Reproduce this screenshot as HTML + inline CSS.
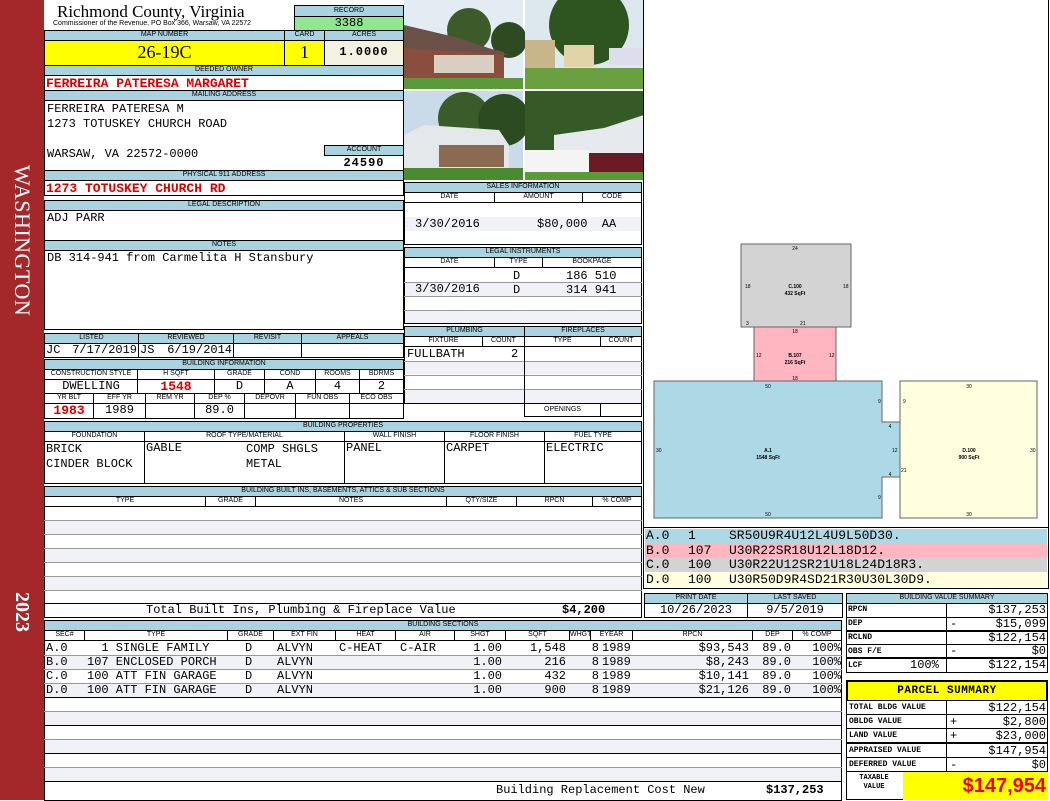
<!DOCTYPE html>
<html><head><meta charset="utf-8"><style>
*{margin:0;padding:0;box-sizing:border-box}
body{width:1050px;height:800px;position:relative;background:#fff;overflow:hidden;font-family:"Liberation Mono",monospace}
.a{position:absolute}
.h{position:absolute;background:#a9d3e1;border:1px solid #000;font:7px/8px "Liberation Sans",sans-serif;text-align:center;color:#000;overflow:hidden;white-space:nowrap}
.w{position:absolute;background:#fff;border:1px solid #000;font:7px/8px "Liberation Sans",sans-serif;text-align:center;overflow:hidden;white-space:nowrap}
.b{position:absolute;border:1px solid #000;background:#fff}
.t{position:absolute;font:12px/13px "Liberation Mono",monospace;white-space:nowrap;color:#000}
.r{color:#d00;font-weight:bold;font-size:13px}
.s{position:absolute;background:#f0f2f8}
.ln{position:absolute;height:1px;background:#000}
.vl{position:absolute;width:1px;background:#000}
</style></head><body>
<!-- sidebar -->
<div class="a" style="left:0;top:0;width:44px;height:800px;background:#a4272a"></div>
<div class="a" style="left:7px;top:153px;width:30px;height:175px;writing-mode:vertical-rl;font:22px/30px 'Liberation Serif',serif;color:#fff;text-align:center;letter-spacing:0.5px">WASHINGTON</div>
<div class="a" style="left:8px;top:592px;width:28px;height:36px;writing-mode:vertical-rl;font:bold 20px/28px 'Liberation Serif',serif;color:#fff">2023</div>

<!-- header -->
<div class="a" style="left:57px;top:2px;font:17px/19px 'Liberation Serif',serif">Richmond County, Virginia</div>
<div class="a" style="left:53px;top:20px;font:7px/8px 'Liberation Sans',sans-serif">Commissioner of the Revenue, PO Box 366, Warsaw, VA 22572</div>
<div class="h" style="left:294px;top:5px;width:110px;height:12px;line-height:10px">RECORD</div>
<div class="b" style="left:294px;top:16px;width:110px;height:15px;background:#8fe88f"></div>
<div class="t" style="left:294px;top:17px;width:110px;text-align:center">3388</div>

<div class="h" style="left:44px;top:30px;width:241px;height:11px">MAP NUMBER</div>
<div class="h" style="left:284px;top:30px;width:41px;height:11px">CARD</div>
<div class="h" style="left:324px;top:30px;width:80px;height:11px">ACRES</div>
<div class="b" style="left:44px;top:40px;width:241px;height:26px;background:#ffff00"></div>
<div class="b" style="left:284px;top:40px;width:41px;height:26px;background:#ffff00"></div>
<div class="b" style="left:324px;top:40px;width:80px;height:26px;background:#f3f1e2"></div>
<div class="a" style="left:44px;top:42px;width:241px;text-align:center;font:18px/20px 'Liberation Serif',serif">26-19C</div>
<div class="a" style="left:284px;top:42px;width:41px;text-align:center;font:18px/20px 'Liberation Serif',serif">1</div>
<div class="t" style="left:324px;top:46px;width:80px;text-align:center;font-weight:bold;letter-spacing:1px">1.0000</div>

<div class="h" style="left:44px;top:65px;width:360px;height:11px">DEEDED OWNER</div>
<div class="b" style="left:44px;top:75px;width:360px;height:16px"></div>
<div class="t r" style="left:46px;top:77px">FERREIRA PATERESA MARGARET</div>
<div class="h" style="left:44px;top:90px;width:360px;height:11px">MAILING ADDRESS</div>
<div class="b" style="left:44px;top:100px;width:360px;height:71px"></div>
<div class="t" style="left:47px;top:103px">FERREIRA PATERESA M</div>
<div class="t" style="left:47px;top:118px">1273 TOTUSKEY CHURCH ROAD</div>
<div class="t" style="left:47px;top:148px">WARSAW, VA 22572-0000</div>
<div class="h" style="left:324px;top:145px;width:80px;height:11px">ACCOUNT</div>
<div class="t" style="left:324px;top:157px;width:80px;text-align:center;font-weight:bold;letter-spacing:1px">24590</div>
<div class="h" style="left:44px;top:170px;width:360px;height:11px">PHYSICAL 911 ADDRESS</div>
<div class="b" style="left:44px;top:180px;width:360px;height:16px"></div>
<div class="t r" style="left:46px;top:182px">1273 TOTUSKEY CHURCH RD</div>

<div class="h" style="left:44px;top:200px;width:360px;height:11px">LEGAL DESCRIPTION</div>
<div class="b" style="left:44px;top:210px;width:360px;height:31px"></div>
<div class="t" style="left:47px;top:212px">ADJ PARR</div>
<div class="h" style="left:44px;top:240px;width:360px;height:11px">NOTES</div>
<div class="b" style="left:44px;top:250px;width:360px;height:80px"></div>
<div class="t" style="left:47px;top:252px">DB 314-941 from Carmelita H Stansbury</div>

<!-- listed -->
<div class="h" style="left:44px;top:333px;width:95px;height:11px">LISTED</div>
<div class="h" style="left:138px;top:333px;width:96px;height:11px">REVIEWED</div>
<div class="h" style="left:233px;top:333px;width:69px;height:11px">REVISIT</div>
<div class="h" style="left:301px;top:333px;width:103px;height:11px">APPEALS</div>
<div class="b" style="left:44px;top:343px;width:95px;height:15px"></div>
<div class="b" style="left:138px;top:343px;width:96px;height:15px"></div>
<div class="b" style="left:233px;top:343px;width:69px;height:15px"></div>
<div class="b" style="left:301px;top:343px;width:103px;height:15px"></div>
<div class="t" style="left:46px;top:344px">JC</div><div class="t" style="left:67px;top:344px;width:70px;text-align:right">7/17/2019</div>
<div class="t" style="left:140px;top:344px">JS</div><div class="t" style="left:160px;top:344px;width:72px;text-align:right">6/19/2014</div>

<div class="h" style="left:44px;top:359px;width:360px;height:11px">BUILDING INFORMATION</div>
<div class="w" style="left:44px;top:369px;width:94px;height:11px">CONSTRUCTION STYLE</div>
<div class="w" style="left:137px;top:369px;width:78px;height:11px">H SQFT</div>
<div class="w" style="left:214px;top:369px;width:51px;height:11px">GRADE</div>
<div class="w" style="left:264px;top:369px;width:52px;height:11px">COND</div>
<div class="w" style="left:315px;top:369px;width:45px;height:11px">ROOMS</div>
<div class="w" style="left:359px;top:369px;width:45px;height:11px">BDRMS</div>
<div class="b" style="left:44px;top:379px;width:94px;height:15px"></div>
<div class="b" style="left:137px;top:379px;width:78px;height:15px"></div>
<div class="b" style="left:214px;top:379px;width:51px;height:15px"></div>
<div class="b" style="left:264px;top:379px;width:52px;height:15px"></div>
<div class="b" style="left:315px;top:379px;width:45px;height:15px"></div>
<div class="b" style="left:359px;top:379px;width:45px;height:15px"></div>
<div class="t" style="left:44px;top:380px;width:94px;text-align:center">DWELLING</div>
<div class="t r" style="left:137px;top:380px;width:78px;text-align:center">1548</div>
<div class="t" style="left:214px;top:380px;width:51px;text-align:center">D</div>
<div class="t" style="left:264px;top:380px;width:52px;text-align:center">A</div>
<div class="t" style="left:315px;top:380px;width:45px;text-align:center">4</div>
<div class="t" style="left:359px;top:380px;width:45px;text-align:center">2</div>
<div class="w" style="left:44px;top:393px;width:50px;height:11px">YR BLT</div>
<div class="w" style="left:93px;top:393px;width:53px;height:11px">EFF YR</div>
<div class="w" style="left:145px;top:393px;width:50px;height:11px">REM YR</div>
<div class="w" style="left:194px;top:393px;width:51px;height:11px">DEP %</div>
<div class="w" style="left:244px;top:393px;width:52px;height:11px">DEPOVR</div>
<div class="w" style="left:295px;top:393px;width:55px;height:11px">FUN OBS</div>
<div class="w" style="left:349px;top:393px;width:55px;height:11px">ECO OBS</div>
<div class="b" style="left:44px;top:403px;width:50px;height:16px"></div>
<div class="b" style="left:93px;top:403px;width:53px;height:16px"></div>
<div class="b" style="left:145px;top:403px;width:50px;height:16px"></div>
<div class="b" style="left:194px;top:403px;width:51px;height:16px"></div>
<div class="b" style="left:244px;top:403px;width:52px;height:16px"></div>
<div class="b" style="left:295px;top:403px;width:55px;height:16px"></div>
<div class="b" style="left:349px;top:403px;width:55px;height:16px"></div>
<div class="t r" style="left:44px;top:404px;width:50px;text-align:center">1983</div>
<div class="t" style="left:93px;top:404px;width:53px;text-align:center">1989</div>
<div class="t" style="left:194px;top:404px;width:51px;text-align:center">89.0</div>

<!-- building properties -->
<div class="h" style="left:44px;top:421px;width:598px;height:11px">BUILDING PROPERTIES</div>
<div class="w" style="left:44px;top:431px;width:101px;height:11px">FOUNDATION</div>
<div class="w" style="left:144px;top:431px;width:201px;height:11px">ROOF TYPE/MATERIAL</div>
<div class="w" style="left:344px;top:431px;width:101px;height:11px">WALL FINISH</div>
<div class="w" style="left:444px;top:431px;width:101px;height:11px">FLOOR FINISH</div>
<div class="w" style="left:544px;top:431px;width:98px;height:11px">FUEL TYPE</div>
<div class="b" style="left:44px;top:441px;width:101px;height:43px"></div>
<div class="b" style="left:144px;top:441px;width:201px;height:43px"></div>
<div class="b" style="left:344px;top:441px;width:101px;height:43px"></div>
<div class="b" style="left:444px;top:441px;width:101px;height:43px"></div>
<div class="b" style="left:544px;top:441px;width:98px;height:43px"></div>
<div class="t" style="left:46px;top:442px;line-height:15px">BRICK<br>CINDER BLOCK</div>
<div class="t" style="left:146px;top:442px">GABLE</div>
<div class="t" style="left:246px;top:442px;line-height:15px">COMP SHGLS<br>METAL</div>
<div class="t" style="left:346px;top:442px">PANEL</div>
<div class="t" style="left:446px;top:442px">CARPET</div>
<div class="t" style="left:546px;top:442px">ELECTRIC</div>

<!-- built ins -->
<div class="h" style="left:44px;top:486px;width:598px;height:11px">BUILDING BUILT INS, BASEMENTS, ATTICS &amp; SUB SECTIONS</div>
<div class="w" style="left:44px;top:496px;width:162px;height:11px">TYPE</div>
<div class="w" style="left:205px;top:496px;width:51px;height:11px">GRADE</div>
<div class="w" style="left:255px;top:496px;width:192px;height:11px">NOTES</div>
<div class="w" style="left:446px;top:496px;width:71px;height:11px">QTY/SIZE</div>
<div class="w" style="left:516px;top:496px;width:77px;height:11px">RPCN</div>
<div class="w" style="left:592px;top:496px;width:50px;height:11px">% COMP</div>
<div class="b" style="left:44px;top:506px;width:598px;height:112px"></div>
<div class="s" style="left:45px;top:520px;width:596px;height:14px"></div>
<div class="s" style="left:45px;top:548px;width:596px;height:14px"></div>
<div class="s" style="left:45px;top:576px;width:596px;height:14px"></div>
<div class="ln" style="left:44px;top:520px;width:598px;background:#999"></div>
<div class="ln" style="left:44px;top:534px;width:598px;background:#999"></div>
<div class="ln" style="left:44px;top:548px;width:598px;background:#999"></div>
<div class="ln" style="left:44px;top:562px;width:598px;background:#999"></div>
<div class="ln" style="left:44px;top:576px;width:598px;background:#999"></div>
<div class="ln" style="left:44px;top:590px;width:598px;background:#999"></div>
<div class="ln" style="left:44px;top:603px;width:598px"></div>
<div class="t" style="left:146px;top:604px">Total Built Ins, Plumbing &amp; Fireplace Value</div>
<div class="t" style="left:562px;top:604px;font-weight:bold">$4,200</div>

<!-- building sections -->
<div class="h" style="left:44px;top:620px;width:798px;height:11px">BUILDING SECTIONS</div>
<div class="w" style="left:44px;top:630px;width:41px;height:11px">SEC#</div>
<div class="w" style="left:84px;top:630px;width:144px;height:11px">TYPE</div>
<div class="w" style="left:227px;top:630px;width:47px;height:11px">GRADE</div>
<div class="w" style="left:273px;top:630px;width:63px;height:11px">EXT FIN</div>
<div class="w" style="left:335px;top:630px;width:61px;height:11px">HEAT</div>
<div class="w" style="left:395px;top:630px;width:60px;height:11px">AIR</div>
<div class="w" style="left:454px;top:630px;width:52px;height:11px">SHGT</div>
<div class="w" style="left:505px;top:630px;width:65px;height:11px">SQFT</div>
<div class="w" style="left:569px;top:630px;width:22px;height:11px">WHGT</div>
<div class="w" style="left:590px;top:630px;width:43px;height:11px">EYEAR</div>
<div class="w" style="left:632px;top:630px;width:121px;height:11px">RPCN</div>
<div class="w" style="left:752px;top:630px;width:41px;height:11px">DEP</div>
<div class="w" style="left:792px;top:630px;width:50px;height:11px">% COMP</div>
<div class="b" style="left:44px;top:640px;width:798px;height:161px"></div>
<div class="s" style="left:45px;top:655px;width:796px;height:14px"></div>
<div class="s" style="left:45px;top:683px;width:796px;height:14px"></div>
<div class="s" style="left:45px;top:711px;width:796px;height:14px"></div>
<div class="s" style="left:45px;top:739px;width:796px;height:14px"></div>
<div class="s" style="left:45px;top:767px;width:796px;height:14px"></div>
<div class="ln" style="left:44px;top:655px;width:798px;background:#999"></div>
<div class="ln" style="left:44px;top:669px;width:798px;background:#999"></div>
<div class="ln" style="left:44px;top:683px;width:798px;background:#999"></div>
<div class="ln" style="left:44px;top:697px;width:798px"></div>
<div class="ln" style="left:44px;top:711px;width:798px;background:#999"></div>
<div class="ln" style="left:44px;top:725px;width:798px"></div>
<div class="ln" style="left:44px;top:739px;width:798px;background:#999"></div>
<div class="ln" style="left:44px;top:753px;width:798px"></div>
<div class="ln" style="left:44px;top:767px;width:798px;background:#999"></div>
<div class="ln" style="left:44px;top:781px;width:798px"></div>
<div class="t" style="left:46px;top:641px;line-height:14px">A.0<br>B.0<br>C.0<br>D.0</div>
<div class="t" style="left:87px;top:641px;line-height:14px">&nbsp;&nbsp;1 SINGLE FAMILY<br>107 ENCLOSED PORCH<br>100 ATT FIN GARAGE<br>100 ATT FIN GARAGE</div>
<div class="t" style="left:245px;top:641px;line-height:14px">D<br>D<br>D<br>D</div>
<div class="t" style="left:277px;top:641px;line-height:14px">ALVYN<br>ALVYN<br>ALVYN<br>ALVYN</div>
<div class="t" style="left:339px;top:641px;line-height:14px">C-HEAT</div>
<div class="t" style="left:400px;top:641px;line-height:14px">C-AIR</div>
<div class="t" style="left:455px;top:641px;width:47px;text-align:right;line-height:14px">1.00<br>1.00<br>1.00<br>1.00</div>
<div class="t" style="left:505px;top:641px;width:61px;text-align:right;line-height:14px">1,548<br>216<br>432<br>900</div>
<div class="t" style="left:569px;top:641px;width:30px;text-align:right;line-height:14px">8<br>8<br>8<br>8</div>
<div class="t" style="left:602px;top:641px;line-height:14px">1989<br>1989<br>1989<br>1989</div>
<div class="t" style="left:632px;top:641px;width:117px;text-align:right;line-height:14px">$93,543<br>$8,243<br>$10,141<br>$21,126</div>
<div class="t" style="left:752px;top:641px;width:39px;text-align:right;line-height:14px">89.0<br>89.0<br>89.0<br>89.0</div>
<div class="t" style="left:792px;top:641px;width:49px;text-align:right;line-height:14px">100%<br>100%<br>100%<br>100%</div>
<div class="t" style="left:496px;top:784px">Building Replacement Cost New</div>
<div class="t" style="left:766px;top:784px;font-weight:bold">$137,253</div>

<!-- photos -->
<svg class="a" style="left:404px;top:0" width="240" height="181" viewBox="0 0 240 181">
<rect width="240" height="181" fill="#fff"/>
<rect x="0" y="0" width="119" height="89" fill="#e2ecf2"/>
<circle cx="65" cy="30" r="22" fill="#3d5a2a"/>
<circle cx="105" cy="40" r="18" fill="#2f4a20"/>
<polygon points="0,28 50,40 100,52 100,78 0,82" fill="#8a4f3c"/>
<polygon points="0,25 55,38 105,55 0,48" fill="#6b5048"/>
<rect x="30" y="55" width="60" height="18" fill="#d8cfc0"/>
<rect x="0" y="78" width="119" height="11" fill="#5a9a38"/>
<rect x="121" y="0" width="119" height="89" fill="#dde8ee"/>
<circle cx="185" cy="25" r="40" fill="#2e5520"/>
<rect x="121" y="40" width="30" height="28" fill="#c8b58a"/>
<rect x="160" y="45" width="30" height="22" fill="#e0d4a8"/>
<rect x="205" y="48" width="35" height="17" fill="#dde"/>
<rect x="121" y="68" width="119" height="21" fill="#6aa040"/>
<rect x="0" y="91" width="119" height="89" fill="#c9dbe8"/>
<circle cx="60" cy="118" r="26" fill="#3a5c2a"/>
<circle cx="100" cy="120" r="26" fill="#2c4a1f"/>
<polygon points="0,135 20,125 95,130 105,145 105,168 0,168" fill="#e4e8ea"/>
<rect x="35" y="145" width="65" height="22" fill="#8a6a50"/>
<rect x="0" y="168" width="119" height="12" fill="#4a8a30"/>
<rect x="121" y="91" width="119" height="89" fill="#355a28"/>
<polygon points="150,135 200,128 240,115 240,160 150,160" fill="#e6eaee"/>
<rect x="121" y="150" width="65" height="22" fill="#f4f4f4"/>
<rect x="185" y="153" width="55" height="20" fill="#6a1a22"/>
<rect x="121" y="172" width="119" height="8" fill="#5a9a38"/>
</svg>

<!-- sales -->
<div class="h" style="left:404px;top:182px;width:238px;height:11px">SALES INFORMATION</div>
<div class="w" style="left:404px;top:192px;width:91px;height:11px">DATE</div>
<div class="w" style="left:494px;top:192px;width:89px;height:11px">AMOUNT</div>
<div class="w" style="left:582px;top:192px;width:60px;height:11px">CODE</div>
<div class="b" style="left:404px;top:202px;width:238px;height:43px"></div>
<div class="s" style="left:405px;top:217px;width:236px;height:14px"></div>
<div class="t" style="left:415px;top:218px">3/30/2016</div>
<div class="t" style="left:537px;top:218px">$80,000 &nbsp;AA</div>
<div class="h" style="left:404px;top:247px;width:238px;height:11px">LEGAL INSTRUMENTS</div>
<div class="w" style="left:404px;top:257px;width:91px;height:11px">DATE</div>
<div class="w" style="left:494px;top:257px;width:49px;height:11px">TYPE</div>
<div class="w" style="left:542px;top:257px;width:100px;height:11px">BOOKPAGE</div>
<div class="b" style="left:404px;top:267px;width:238px;height:57px"></div>
<div class="s" style="left:405px;top:282px;width:236px;height:14px"></div>
<div class="s" style="left:405px;top:310px;width:236px;height:13px"></div>
<div class="ln" style="left:404px;top:282px;width:238px;background:#999"></div>
<div class="ln" style="left:404px;top:296px;width:238px;background:#999"></div>
<div class="ln" style="left:404px;top:310px;width:238px;background:#999"></div>
<div class="t" style="left:415px;top:283px">3/30/2016</div>
<div class="t" style="left:513px;top:269px;line-height:14px">D<br>D</div>
<div class="t" style="left:566px;top:269px;line-height:14px">186 510<br>314 941</div>

<!-- plumbing -->
<div class="h" style="left:404px;top:326px;width:121px;height:11px">PLUMBING</div>
<div class="h" style="left:524px;top:326px;width:118px;height:11px">FIREPLACES</div>
<div class="w" style="left:404px;top:336px;width:79px;height:11px">FIXTURE</div>
<div class="w" style="left:482px;top:336px;width:43px;height:11px">COUNT</div>
<div class="w" style="left:524px;top:336px;width:77px;height:11px">TYPE</div>
<div class="w" style="left:600px;top:336px;width:42px;height:11px">COUNT</div>
<div class="b" style="left:404px;top:346px;width:121px;height:58px"></div>
<div class="b" style="left:524px;top:346px;width:118px;height:58px"></div>
<div class="s" style="left:405px;top:361px;width:236px;height:13px"></div>
<div class="s" style="left:405px;top:389px;width:236px;height:14px"></div>
<div class="ln" style="left:404px;top:361px;width:238px;background:#999"></div>
<div class="ln" style="left:404px;top:375px;width:238px;background:#999"></div>
<div class="ln" style="left:404px;top:389px;width:238px;background:#999"></div>
<div class="vl" style="left:524px;top:346px;height:58px"></div>
<div class="t" style="left:407px;top:348px">FULLBATH</div>
<div class="t" style="left:511px;top:348px">2</div>
<div class="w" style="left:524px;top:403px;width:77px;height:14px;line-height:12px">OPENINGS</div>
<div class="b" style="left:600px;top:403px;width:42px;height:14px"></div>

<!-- sketch -->
<div class="b" style="left:643px;top:-1px;width:406px;height:529px"></div>
<svg class="a" style="left:644px;top:0" width="404" height="527" viewBox="644 0 404 527" font-family="Liberation Sans" font-size="5">
<rect x="741" y="244" width="110" height="83" fill="#d3d3d3" stroke="#666"/>
<rect x="754" y="327" width="82" height="54" fill="#ffb6c1" stroke="#666"/>
<polygon points="654,381 882,381 882,422 900,422 900,477 882,477 882,518 654,518" fill="#add8e6" stroke="#666"/>
<rect x="900" y="381" width="137" height="137" fill="#ffffe0" stroke="#666"/>
<text x="795" y="250" text-anchor="middle">24</text><text x="745" y="288">18</text><text x="843" y="288">18</text>
<text x="746" y="325">3</text><text x="800" y="325">21</text>
<text x="795" y="288" text-anchor="middle" font-weight="bold">C.100</text><text x="795" y="295" text-anchor="middle" font-weight="bold">432 SqFt</text>
<text x="795" y="333" text-anchor="middle">18</text><text x="795" y="380" text-anchor="middle">18</text><text x="756" y="357">12</text><text x="829" y="357">12</text>
<text x="795" y="357" text-anchor="middle" font-weight="bold">B.107</text><text x="795" y="364" text-anchor="middle" font-weight="bold">216 SqFt</text>
<text x="768" y="388" text-anchor="middle">50</text><text x="768" y="516" text-anchor="middle">50</text><text x="656" y="452">30</text>
<text x="878" y="403">9</text><text x="878" y="499">9</text><text x="890" y="428" text-anchor="middle">4</text><text x="890" y="476" text-anchor="middle">4</text><text x="892" y="452">12</text>
<text x="903" y="403">9</text><text x="901" y="472">21</text>
<text x="768" y="452" text-anchor="middle" font-weight="bold">A.1</text><text x="768" y="459" text-anchor="middle" font-weight="bold">1548 SqFt</text>
<text x="969" y="388" text-anchor="middle">30</text><text x="969" y="516" text-anchor="middle">30</text><text x="1030" y="452">30</text>
<text x="969" y="452" text-anchor="middle" font-weight="bold">D.100</text><text x="969" y="459" text-anchor="middle" font-weight="bold">900 SqFt</text>
</svg>
<div class="b" style="left:643px;top:527px;width:406px;height:62px"></div>
<div class="a" style="left:645px;top:529px;width:402px;height:14px;background:#add8e6"></div>
<div class="a" style="left:645px;top:543px;width:402px;height:15px;background:#ffb6c1"></div>
<div class="a" style="left:645px;top:558px;width:402px;height:14px;background:#d3d3d3"></div>
<div class="a" style="left:645px;top:572px;width:402px;height:15px;background:#ffffe0"></div>
<div class="t" style="left:646px;top:529px;line-height:14.5px;font-size:13px">A.0<br>B.0<br>C.0<br>D.0</div>
<div class="t" style="left:688px;top:529px;line-height:14.5px;font-size:13px">1<br>107<br>100<br>100</div>
<div class="t" style="left:729px;top:529px;line-height:14.5px;font-size:13px">SR50U9R4U12L4U9L50D30.<br>U30R22SR18U12L18D12.<br>U30R22U12SR21U18L24D18R3.<br>U30R50D9R4SD21R30U30L30D9.</div>

<!-- print date -->
<div class="h" style="left:644px;top:593px;width:104px;height:11px">PRINT DATE</div>
<div class="h" style="left:747px;top:593px;width:96px;height:11px">LAST SAVED</div>
<div class="b" style="left:644px;top:603px;width:104px;height:15px"></div>
<div class="b" style="left:747px;top:603px;width:96px;height:15px"></div>
<div class="t" style="left:644px;top:604px;width:104px;text-align:center">10/26/2023</div>
<div class="t" style="left:747px;top:604px;width:96px;text-align:center">9/5/2019</div>

<!-- building value summary -->
<div class="h" style="left:846px;top:593px;width:202px;height:11px">BUILDING VALUE SUMMARY</div>
<div class="b" style="left:846px;top:603px;width:202px;height:70px"></div>
<div class="vl" style="left:946px;top:603px;height:70px"></div>
<div class="ln" style="left:846px;top:617px;width:202px"></div>
<div class="ln" style="left:846px;top:630px;width:202px;height:2px"></div>
<div class="ln" style="left:846px;top:644px;width:202px"></div>
<div class="ln" style="left:846px;top:657px;width:202px;height:2px"></div>
<div class="a" style="left:848px;top:606px;font:bold 8px/8px 'Liberation Mono',monospace">RPCN</div>
<div class="a" style="left:848px;top:620px;font:bold 8px/8px 'Liberation Mono',monospace">DEP</div>
<div class="a" style="left:848px;top:634px;font:bold 8px/8px 'Liberation Mono',monospace">RCLND</div>
<div class="a" style="left:848px;top:648px;font:bold 8px/8px 'Liberation Mono',monospace">OBS F/E</div>
<div class="a" style="left:848px;top:662px;font:bold 8px/8px 'Liberation Mono',monospace">LCF</div>
<div class="t" style="left:910px;top:659px">100%</div>
<div class="t" style="left:950px;top:604px;width:96px;text-align:right;line-height:13.8px">$137,253<br>$15,099<br>$122,154<br>$0<br>$122,154</div>
<div class="t" style="left:950px;top:618px">-</div>
<div class="t" style="left:950px;top:645px">-</div>

<!-- parcel summary -->
<div class="b" style="left:846px;top:680px;width:202px;height:22px;background:#ffff00;border-width:2px"></div>
<div class="a" style="left:846px;top:684px;width:202px;text-align:center;font:bold 11px/14px 'Liberation Mono',monospace;letter-spacing:0.5px">PARCEL SUMMARY</div>
<div class="b" style="left:846px;top:700px;width:202px;height:100px"></div>
<div class="vl" style="left:946px;top:700px;height:71px"></div>
<div class="ln" style="left:846px;top:714px;width:202px"></div>
<div class="ln" style="left:846px;top:728px;width:202px"></div>
<div class="ln" style="left:846px;top:742px;width:202px;height:2px"></div>
<div class="ln" style="left:846px;top:757px;width:202px"></div>
<div class="ln" style="left:846px;top:771px;width:202px"></div>
<div class="a" style="left:849px;top:701px;font:bold 8px/14.2px 'Liberation Mono',monospace">TOTAL BLDG VALUE<br>OBLDG VALUE<br>LAND VALUE<br>APPRAISED VALUE<br>DEFERRED VALUE</div>
<div class="t" style="left:950px;top:701px;width:96px;text-align:right;line-height:14.2px">$122,154<br>$2,800<br>$23,000<br>$147,954<br>$0</div>
<div class="t" style="left:950px;top:715px;line-height:14.2px">+<br>+<br><br>-</div>
<div class="a" style="left:848px;top:774px;width:52px;text-align:center;font:bold 7px/9px 'Liberation Mono',monospace">TAXABLE<br>VALUE</div>
<div class="a" style="left:903px;top:772px;width:145px;height:28px;background:#ffff00"></div>
<div class="a" style="left:903px;top:772px;width:143px;text-align:right;font:bold 20px/28px 'Liberation Sans',sans-serif;color:#e00">$147,954</div>
</body></html>
